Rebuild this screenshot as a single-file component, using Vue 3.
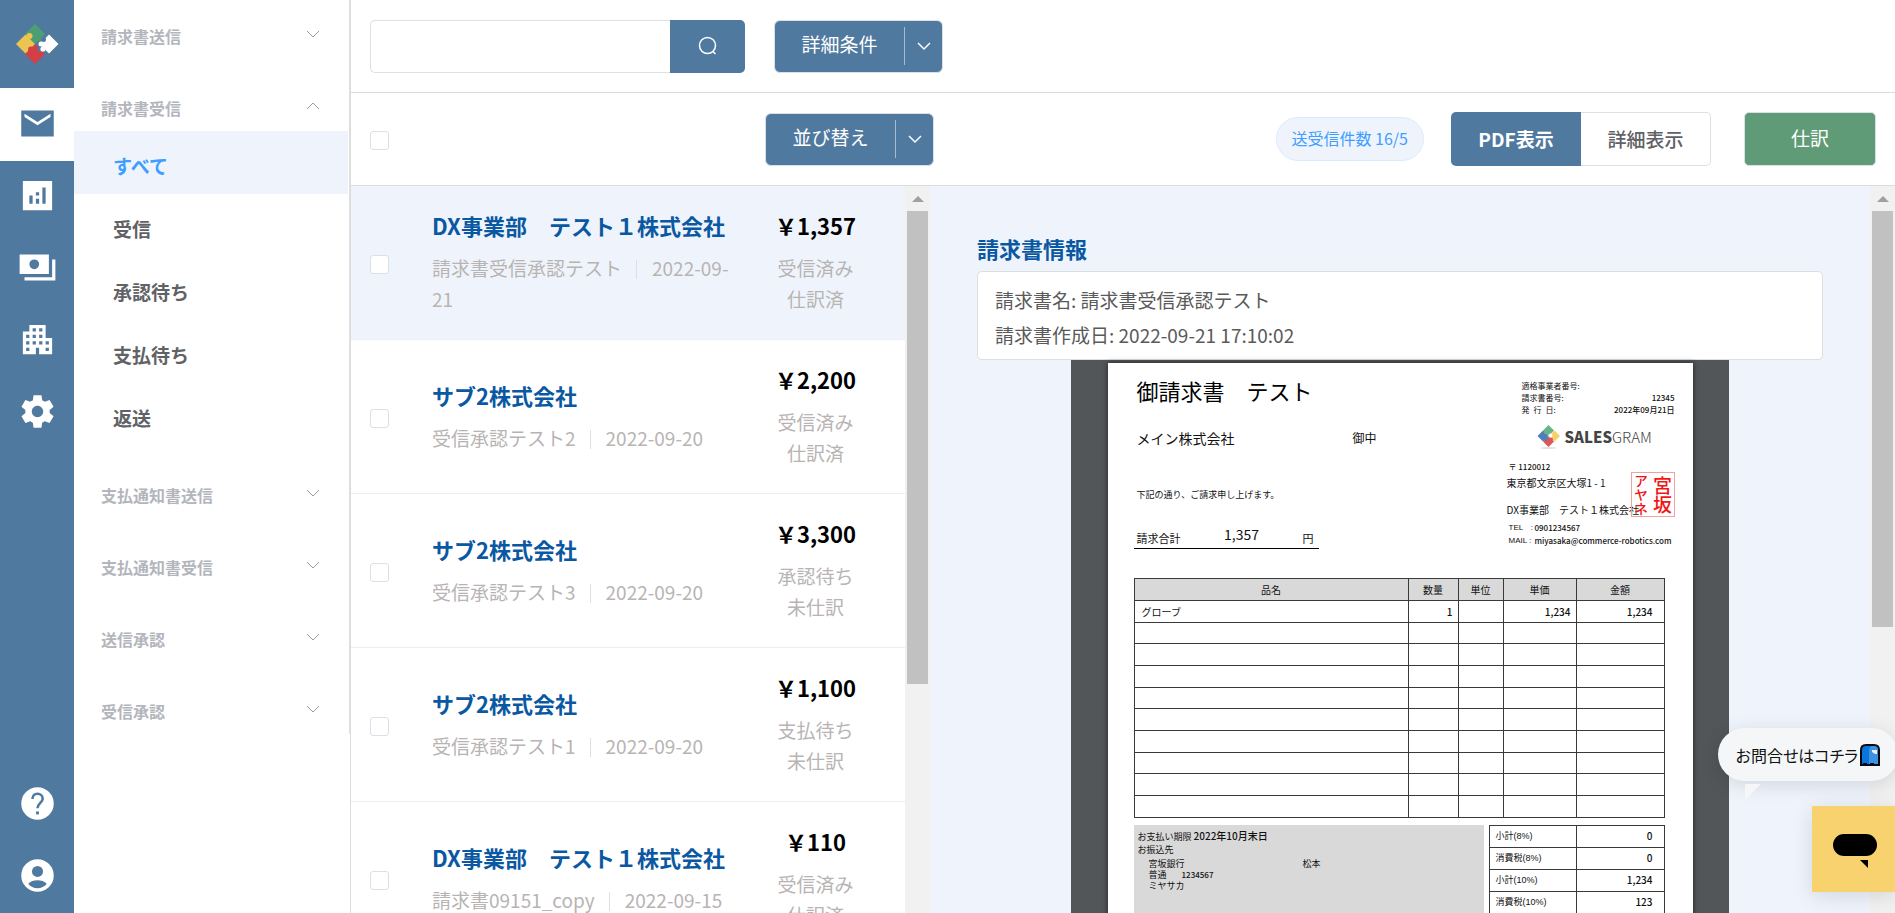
<script setup>
import { ref } from 'vue'

const mainIcons = [
  { id: 'mail', label: 'メール', d: 'M22 4H2v16h20V4zm-2 4l-8 5-8-5V6l8 5 8-5v2z' },
  { id: 'chart', label: '分析', d: 'M21 3H3v18h18V3zM9 17H7v-5h2v5zm4 0h-2v-3h2v3zm0-5h-2v-2h2v2zm4 5h-2V7h2v10z' },
  { id: 'payments', label: '支払', d: 'M19 4H1v12h18V4zm-9 9a3 3 0 1 1 0-6 3 3 0 0 1 0 6zM23 7v13H4v-2h17V7h2z' },
  { id: 'company', label: '会社', d: 'M17 11V3H7v4H3v14h8v-4h2v4h8V11h-4zM7 19H5v-2h2v2zm0-4H5v-2h2v2zm0-4H5V9h2v2zm4 4H9v-2h2v2zm0-4H9V9h2v2zm0-4H9V5h2v2zm4 8h-2v-2h2v2zm0-4h-2V9h2v2zm0-4h-2V5h2v2zm4 12h-2v-2h2v2zm0-4h-2v-2h2v2z' },
  { id: 'settings', label: '設定', d: 'M19.44 12.99l-.01.02c.04-.33.08-.67.08-1.01 0-.34-.03-.66-.07-.99l.01.02 2.44-1.92-2.43-4.22-2.87 1.16.01.01c-.52-.4-1.09-.74-1.71-1h.01L14.44 2H9.57l-.44 3.07h.01c-.62.26-1.19.6-1.71 1l.01-.01-2.88-1.17-2.44 4.22 2.44 1.92.01-.02c-.04.33-.07.65-.07.99 0 .34.03.68.08 1.01l-.01-.02-2.1 1.65-.33.26 2.43 4.2 2.88-1.15-.02-.04c.53.41 1.1.75 1.73 1.01h-.03L9.58 22h4.85s.03-.18.06-.42l.38-2.65h-.01c.62-.26 1.2-.6 1.73-1.01l-.02.04 2.88 1.15 2.43-4.2s-.14-.12-.33-.26l-2.08-1.66zM12 15.5c-1.93 0-3.5-1.57-3.5-3.5s1.57-3.5 3.5-3.5 3.5 1.57 3.5 3.5-1.57 3.5-3.5 3.5z' },
]
const activeIcon = ref('mail')

const groups = [
  { title: '請求書送信' },
  { title: '請求書受信', open: true, items: ['すべて', '受信', '承認待ち', '支払待ち', '返送'] },
  { title: '支払通知書送信' },
  { title: '支払通知書受信' },
  { title: '送信承認' },
  { title: '受信承認' },
]
const activeItem = ref('すべて')

const invoices = [
  { company: 'DX事業部　テスト１株式会社', name: '請求書受信承認テスト', date: '2022-09-21', amount: '￥1,357', s1: '受信済み', s2: '仕訳済' },
  { company: 'サブ2株式会社', name: '受信承認テスト2', date: '2022-09-20', amount: '￥2,200', s1: '受信済み', s2: '仕訳済' },
  { company: 'サブ2株式会社', name: '受信承認テスト3', date: '2022-09-20', amount: '￥3,300', s1: '承認待ち', s2: '未仕訳' },
  { company: 'サブ2株式会社', name: '受信承認テスト1', date: '2022-09-20', amount: '￥1,100', s1: '支払待ち', s2: '未仕訳' },
  { company: 'DX事業部　テスト１株式会社', name: '請求書09151_copy', date: '2022-09-15', amount: '￥110', s1: '受信済み', s2: '仕訳済' },
]

const totals = [
  ['小計(8%)', '0'],
  ['消費税(8%)', '0'],
  ['小計(10%)', '1,234'],
  ['消費税(10%)', '123'],
  ['', ''],
]
</script>

<template>
  <div class="app">
    <nav class="rail" aria-label="メイン">
      <a href="#" class="brand" aria-label="ホーム">
        <svg width="44" height="40" viewBox="0 0 44 40">
          <path d="M20 0 30 10 20 20 10 10z" fill="#4b9f72" />
          <path d="M20 20 30 30 20 40 10 30z" fill="#d43f46" />
          <path d="M10.500 10.500 20 20 10.500 29.500 1 20z" fill="#ecc452" />
          <circle cx="14.500" cy="12" r="3" fill="#ecc452" />
          <circle cx="16" cy="25.500" r="3" fill="#d43f46" />
          <circle cx="25.500" cy="14.500" r="3" fill="#4b9f72" />
          <circle cx="25" cy="25" r="2.600" fill="#5079a0" />
          <path d="M34 10.500 43.500 20 34 29.500 24.500 20z" fill="#fff" />
          <circle cx="28.500" cy="15.500" r="2.500" fill="#5079a0" />
          <circle cx="28" cy="25" r="2.600" fill="#fff" />
          <circle cx="26" cy="20" r="2.500" fill="#fff" />
        </svg>
      </a>
      <a v-for="i in mainIcons" :key="i.id" href="#" class="rail-link rail-main" :class="{ active: i.id === activeIcon }" :aria-label="i.label" @click.prevent="activeIcon = i.id">
        <svg width="39" height="39" viewBox="0 0 24 24"><path :d="i.d" fill="currentColor" fill-rule="evenodd" /></svg>
      </a>
      <div class="rail-bottom">
        <a href="#" class="rail-link" aria-label="ヘルプ">
          <svg width="39" height="39" viewBox="0 0 24 24">
            <circle cx="12" cy="12" r="10" fill="currentColor" />
            <path d="M8.900 9.200C8.900 7.200 10.200 6 12 6s3.200 1.200 3.200 3c0 2.500-3.200 2.800-3.200 5.900" fill="none" stroke="#5079a0" stroke-width="1.600" />
            <path d="M11.100 16.900h1.800v1.800h-1.800z" fill="#5079a0" />
          </svg>
        </a>
        <a href="#" class="rail-link" aria-label="アカウント">
          <svg width="39" height="39" viewBox="0 0 24 24">
            <circle cx="12" cy="12" r="10" fill="currentColor" />
            <circle cx="12" cy="9.500" r="3.400" fill="#5079a0" />
            <path d="M6.300 17.100C7.600 15.600 9.700 14.900 12 14.900s4.400.7 5.700 2.200c-1.300 1.700-3.400 2.800-5.700 2.800s-4.400-1.100-5.700-2.800z" fill="#5079a0" />
          </svg>
        </a>
      </div>
    </nav>

    <aside class="side">
      <nav class="menu" aria-label="請求書メニュー">
        <div v-for="g in groups" :key="g.title" class="group">
          <button type="button" class="group-head">
            <span>{{ g.title }}</span>
            <svg class="group-arrow" width="14" height="8" viewBox="0 0 14 8"><path :d="g.open ? 'M1 7l6-6 6 6' : 'M1 1l6 6 6-6'" fill="none" stroke="#9a9ca3" /></svg>
          </button>
          <a v-for="it in g.items" :key="it" href="#" class="item" :class="{ active: it === activeItem }" @click.prevent="activeItem = it">{{ it }}</a>
        </div>
      </nav>
    </aside>

    <main class="main">
      <header class="bar">
        <div class="search">
          <input type="text" class="search-input" aria-label="検索" />
          <button type="button" class="search-btn" aria-label="検索する">
            <svg width="20" height="20" viewBox="0 0 20 20" fill="none" stroke="#fff" stroke-width="1.500"><circle cx="9.500" cy="9.500" r="8" /><path d="M14.500 15l3 3" /></svg>
          </button>
        </div>
        <button type="button" class="split">
          <span class="split-label">詳細条件</span>
          <span class="split-arrow"><svg width="14" height="9" viewBox="0 0 14 9"><path d="M1 1l6 6 6-6" fill="none" stroke="#fff" stroke-width="1.500" /></svg></span>
        </button>
      </header>

      <div class="bar">
        <div class="bar-left">
          <input type="checkbox" class="check" aria-label="すべて選択" />
          <button type="button" class="split">
            <span class="split-label">並び替え</span>
            <span class="split-arrow"><svg width="14" height="9" viewBox="0 0 14 9"><path d="M1 1l6 6 6-6" fill="none" stroke="#fff" stroke-width="1.500" /></svg></span>
          </button>
        </div>
        <div class="bar-right">
          <span class="pill">送受信件数 16/5</span>
          <div class="toggle">
            <button type="button" class="toggle-btn on">PDF表示</button>
            <button type="button" class="toggle-btn">詳細表示</button>
          </div>
          <button type="button" class="green">仕訳</button>
        </div>
      </div>

      <div class="panes">
        <section class="pane">
          <ul class="list">
            <li v-for="(v, n) in invoices" :key="n" class="row" :class="{ selected: n === 0 }">
              <input type="checkbox" class="check" :aria-label="v.name" />
              <div class="row-text">
                <div class="row-title">{{ v.company }}</div>
                <div class="row-sub">{{ v.name }}<span class="vbar"></span>{{ v.date }}</div>
              </div>
              <div class="row-right">
                <div class="row-amount">{{ v.amount }}</div>
                <div class="row-sub">{{ v.s1 }}</div>
                <div class="row-sub">{{ v.s2 }}</div>
              </div>
            </li>
          </ul>
          <div class="track" aria-hidden="true">
            <svg width="12" height="6" viewBox="0 0 12 6"><path d="M6 0l6 6H0z" fill="#a0a0a0" /></svg>
            <div class="thumb thumb-list"></div>
          </div>
        </section>

        <section class="pane detail">
          <div class="detail-body">
            <h2 class="detail-title">請求書情報</h2>
            <div class="card">
              <div>請求書名: 請求書受信承認テスト</div>
              <div>請求書作成日: 2022-09-21 17:10:02</div>
            </div>
            <div class="viewer">
              <article class="sheet">
                <div class="sheet-top">
                  <div class="to">
                    <h3 class="doc-title">御請求書　テスト</h3>
                    <div class="client"><span>メイン株式会社</span><span class="onchu">御中</span></div>
                    <p class="note">下記の通り、ご請求申し上げます。</p>
                    <div class="sum"><span>請求合計</span><span class="sum-value">1,357</span><span>円</span></div>
                  </div>
                  <div class="from">
                    <div class="meta"><span>適格事業者番号:</span></div>
                    <div class="meta"><span>請求書番号:</span><span class="value">12345</span></div>
                    <div class="meta"><span>発&ensp;行&ensp;日:</span><span class="value">2022年09月21日</span></div>
                    <div class="logo">
                      <svg width="24" height="24" viewBox="0 0 24 24">
                        <ellipse cx="11.500" cy="23" rx="8" ry="1" fill="#e2e2e2" />
                        <path d="M11.500 0 17 5.500 11.500 11 6 5.500z" fill="#66b587" />
                        <path d="M11.500 11 17 16.500 11.500 22 6 16.500z" fill="#e05558" />
                        <path d="M6 5.500 11.500 11 6 16.500.5 11z" fill="#4f7fb8" />
                        <path d="M17.500 5.500 23 11l-5.500 5.500L12 11z" fill="#f7cf6b" />
                        <circle cx="8.700" cy="7" r="2" fill="#66b587" />
                        <circle cx="9" cy="14" r="2" fill="#4f7fb8" />
                        <circle cx="14" cy="14.500" r="2" fill="#e05558" />
                        <circle cx="13.500" cy="10.500" r="2" fill="#fff" />
                      </svg>
                      <span class="logo-text"><b>SALES</b>GRAM</span>
                    </div>
                    <div class="zip">〒 <span class="value">1120012</span></div>
                    <div class="addr">東京都文京区大塚1 - 1</div>
                    <div class="corp">DX事業部　テスト１株式会社</div>
                    <div class="contact"><span class="contact-key">TEL　:</span><span class="value">0901234567</span></div>
                    <div class="contact"><span class="contact-key">MAIL :</span><span class="mail">miyasaka@commerce-robotics.com</span></div>
                    <div class="stamp"><span class="stamp-1">宮坂</span><span class="stamp-2">アヤネ</span></div>
                  </div>
                </div>

                <table class="lines">
                  <colgroup><col /><col class="c-qty" /><col class="c-unit" /><col class="c-price" /><col class="c-total" /></colgroup>
                  <thead>
                    <tr><th>品名</th><th>数量</th><th>単位</th><th>単価</th><th>金額</th></tr>
                  </thead>
                  <tbody>
                    <tr><td>グローブ</td><td class="num tight">1</td><td></td><td class="num tight">1,234</td><td class="num">1,234</td></tr>
                    <tr v-for="n in 9" :key="n"><td></td><td></td><td></td><td></td><td></td></tr>
                  </tbody>
                </table>

                <div class="sheet-bottom">
                  <div class="bank">
                    <div class="due">お支払い期限 <span class="due-date">2022年10月末日</span></div>
                    <div class="due">お振込先</div>
                    <div class="bank-row"><span>宮坂銀行</span><span>松本</span></div>
                    <div class="bank-line">普通<span class="acct">1234567</span></div>
                    <div class="bank-line">ミヤサカ</div>
                  </div>
                  <table class="totals">
                    <tbody>
                      <tr v-for="t in totals" :key="t[0]"><th>{{ t[0] }}</th><td class="num">{{ t[1] }}</td></tr>
                    </tbody>
                  </table>
                </div>
              </article>
            </div>
          </div>
          <div class="track" aria-hidden="true">
            <svg width="12" height="6" viewBox="0 0 12 6"><path d="M6 0l6 6H0z" fill="#a0a0a0" /></svg>
            <div class="thumb thumb-detail"></div>
          </div>
        </section>
      </div>
    </main>

    <div class="bubble">
      <span>お問合せはコチラ</span>
      <svg width="20" height="22" viewBox="0 0 20 22">
        <path d="M1 21V6c0-3 2-5 5-5h8c3 0 5 2 5 5v15z" fill="#0a74da" stroke="#0a0a14" stroke-width="2" />
        <path d="M9 20V7c0-2.500 1-4.500 3-5h2c2.500 0 4 1.500 4 4v14z" fill="#3b93e0" />
        <path d="M12 6h5v4h-2l-3-2z" fill="#eef" />
        <path d="M3 19h4v2H3zM10 19h4v2h-4z" fill="#0a0a14" />
      </svg>
      <svg class="tail" width="16" height="16" viewBox="0 0 16 16"><path d="M0 0h16L0 16z" fill="#f5f6f8" /></svg>
    </div>
    <button type="button" class="chat" aria-label="チャット">
      <svg width="44" height="34" viewBox="0 0 44 34"><rect width="44" height="22" rx="11" /><path d="M27 26h8v8z" /></svg>
    </button>
  </div>
</template>

<style>
body {
  margin: 0;
}
</style>

<style scoped>
.app {
  display: flex;
  height: 100vh;
  overflow: hidden;
  position: relative;
  background: #fff;
  color: #606266;
  font-family: "Noto Sans CJK JP", sans-serif;
  font-size: 19px;
}
.app *,
.app {
  box-sizing: border-box;
}
button,
input {
  font-family: inherit;
  margin: 0;
}
a {
  text-decoration: none;
  color: inherit;
}
svg {
  display: block;
  flex: none;
}

/* icon rail */
.rail {
  flex: 0 0 74px;
  display: flex;
  flex-direction: column;
  background: #5079a0;
  padding-bottom: 2px;
}
.brand {
  height: 88px;
  padding: 24px 0 0 15px;
}
.rail-link {
  height: 72px;
  display: flex;
  align-items: center;
  justify-content: center;
  color: #fff;
}
.rail-main {
  padding-bottom: 3px;
}
.rail-link.active {
  height: 73px;
  background: #fff;
  color: #5079a0;
}
.rail-bottom {
  margin-top: auto;
}

/* side menu */
.side {
  flex: 0 0 276px;
}
.menu {
  display: flex;
  flex-direction: column;
  gap: 28px;
  padding: 15px 1px 0 0;
  border-right: 1px solid #dfe0e2;
}
.group-head {
  width: 100%;
  height: 44px;
  display: flex;
  align-items: center;
  justify-content: space-between;
  padding: 0 28px 2px 27px;
  border: 0;
  background: none;
  color: #b3b5bd;
  font-size: 16px;
  font-weight: 700;
}
.group-arrow {
  margin-bottom: 4px;
}
.item {
  display: flex;
  align-items: center;
  height: 63px;
  padding: 6px 0 0 39px;
  font-weight: 700;
}
.item.active {
  background: #eff4fc;
  color: #409eff;
}

/* top bars */
.main {
  flex: 1;
  min-width: 0;
  display: flex;
  flex-direction: column;
  border-left: 1px solid #dcdcdc;
}
.bar {
  flex: 0 0 93px;
  display: flex;
  align-items: center;
  border-bottom: 1px solid #dcdcdc;
  padding: 0 19px;
}
.search {
  display: flex;
  width: 375px;
  height: 53px;
  margin-right: 29px;
}
.search-input {
  flex: 1;
  min-width: 0;
  border: 1px solid #dcdfe6;
  border-right: 0;
  border-radius: 5px 0 0 5px;
  padding: 0 16px;
  font-size: 19px;
}
.search-btn {
  width: 75px;
  display: flex;
  align-items: center;
  justify-content: center;
  border: 0;
  border-radius: 0 5px 5px 0;
  background: #5079a0;
}
.split {
  display: flex;
  align-items: center;
  width: 169px;
  height: 53px;
  padding: 0;
  border: 1px solid #dcdfe6;
  border-radius: 6px;
  background: #5079a0;
  color: #fff;
  font-size: 19px;
}
.split-label {
  width: 130px;
  height: 38px;
  line-height: 33px;
  border-right: 1px solid #a7bccf;
}
.split-arrow {
  flex: 1;
  display: flex;
  justify-content: center;
}
.bar-left {
  flex: 0 0 564px;
  display: flex;
  align-items: center;
  justify-content: space-between;
}
.bar-left .check {
  margin-top: 3px;
}
.bar-right {
  display: flex;
  align-items: center;
  margin-left: auto;
}
.check {
  appearance: none;
  flex: none;
  width: 19px;
  height: 19px;
  border: 1px solid #dcdfe6;
  border-radius: 3px;
  background: #fff;
}
.pill {
  height: 44px;
  line-height: 41px;
  padding: 0 15px;
  border: 1px solid #d9ecff;
  border-radius: 22px;
  background: #eff4fc;
  color: #409eff;
  font-size: 16px;
}
.toggle {
  display: flex;
  margin-left: 27px;
}
.toggle-btn {
  width: 130px;
  height: 54px;
  padding: 0 0 2px;
  border: 1px solid #dcdfe6;
  border-left: 0;
  border-radius: 0 5px 5px 0;
  background: #fff;
  color: #606266;
  font-size: 19px;
  font-weight: 500;
}
.toggle-btn.on {
  border: 0;
  border-radius: 5px 0 0 5px;
  background: #5079a0;
  color: #fff;
  font-weight: 700;
}
.green {
  width: 132px;
  height: 54px;
  margin-left: 33px;
  padding: 0 0 4px;
  border: 1px solid #dcdfe6;
  border-radius: 5px;
  background: #5f9b76;
  color: #fff;
  font-size: 19px;
}

/* panes */
.panes {
  flex: 1;
  min-height: 0;
  display: grid;
  grid-template-columns: 3fr 5fr;
}
.pane {
  display: flex;
  min-width: 0;
  min-height: 0;
  overflow: hidden;
}
.track {
  flex: 0 0 25px;
  display: flex;
  flex-direction: column;
  align-items: center;
  gap: 9px;
  padding-top: 10px;
  background: #f1f1f1;
}
.thumb {
  width: 21px;
  background: #c1c1c1;
}
.thumb-list {
  height: 66%;
}
.thumb-detail {
  height: 58%;
}
.list {
  flex: 1;
  min-width: 0;
  margin: 0;
  padding: 0;
  list-style: none;
}
.row {
  display: flex;
  align-items: center;
  height: 154px;
  padding: 0 9px 0 19px;
  border-bottom: 1px solid #ebeef5;
}
.row.selected {
  background: #eff4fc;
}
.row .check {
  margin-top: 3px;
}
.row-text {
  flex: 1;
  min-width: 0;
  padding: 0 0 3px 43px;
}
.row-title {
  margin-bottom: 10px;
  line-height: 34px;
  font-size: 22px;
  font-weight: 700;
  color: #0b58a2;
  white-space: nowrap;
}
.row-sub {
  line-height: 31px;
  color: #b8b4b4;
}
.vbar {
  display: inline-block;
  width: 1px;
  height: 19px;
  margin: 0 15px 0 14px;
  vertical-align: -3px;
  background: #dcdfe6;
}
.row-right {
  flex: 0 0 161px;
  padding-bottom: 3px;
  text-align: center;
}
.row-amount {
  margin-bottom: 10px;
  line-height: 34px;
  font-size: 22px;
  font-weight: 700;
  color: #000;
}

/* detail */
.detail {
  background: #eff4fc;
}
.detail-body {
  flex: 1;
  min-width: 0;
  padding-top: 44px;
}
.detail-title {
  margin: 0 5% 5px;
  line-height: 36px;
  font-size: 22px;
  font-weight: 700;
  color: #0b58a2;
}
.card {
  margin: 0 5%;
  padding: 10px 17px 7px;
  border: 1px solid #dcdfe0;
  border-radius: 5px;
  background: #fff;
  color: #5a5a5a;
  line-height: 35px;
}
.viewer {
  width: 70%;
  margin: 0 auto;
  padding-top: 3px;
  background: #525659;
}
.sheet {
  max-width: 585px;
  min-height: 827px;
  margin: 0 auto;
  padding: 0 28px 0 26px;
  background: #fff;
  box-shadow: 0 0 5px #222;
  color: #111;
  font-size: 10px;
}
.sheet-top {
  display: flex;
  justify-content: space-between;
  height: 215px;
  margin-right: -10px;
}
.to {
  padding-top: 13px;
}
.doc-title {
  margin: 0 0 24px 3px;
  font-size: 22px;
  font-weight: 400;
  line-height: 28px;
  color: #000;
}
.client {
  display: flex;
  width: 240px;
  justify-content: space-between;
  margin: 0 0 40px 3px;
  font-size: 14px;
  line-height: 20px;
}
.onchu {
  font-size: 12px;
}
.note {
  margin: 0 0 26px 3px;
  font-size: 9px;
  line-height: 14px;
}
.sum {
  display: flex;
  justify-content: space-between;
  width: 185px;
  padding: 0 5px 0 3px;
  border-bottom: 1px solid #000;
  font-size: 11px;
  line-height: 20px;
}
.sum-value {
  font-size: 14px;
  line-height: 12px;
}
.value,
.num,
.due-date,
.mail,
.acct {
  font-weight: 500;
}
.from {
  position: relative;
  width: 168px;
  padding-top: 17px;
}
.meta {
  display: flex;
  justify-content: space-between;
  padding-left: 15px;
  font-size: 8px;
  line-height: 12px;
}
.logo {
  display: flex;
  align-items: center;
  gap: 4px;
  height: 24px;
  margin: 9px 0 11px 30px;
}
.logo-text {
  font-size: 15px;
  font-weight: 300;
  line-height: 24px;
  color: #444;
}
.logo-text b {
  font-weight: 900;
}
.zip {
  padding-left: 2px;
  font-size: 8px;
  line-height: 14px;
}
.addr {
  margin: 1px 0 11px;
  line-height: 16px;
}
.corp {
  margin-bottom: 3px;
  line-height: 16px;
  white-space: nowrap;
}
.contact {
  display: flex;
  padding-left: 2px;
  font-size: 8px;
  line-height: 13px;
  white-space: nowrap;
}
.contact-key {
  flex: 0 0 26px;
  font-family: "Liberation Sans", "Noto Sans CJK JP", sans-serif;
}
.stamp {
  position: absolute;
  right: 0;
  top: 109px;
  width: 44px;
  height: 45px;
  display: flex;
  flex-direction: row-reverse;
  align-items: center;
  justify-content: space-around;
  border: 1px solid #eda3a0;
  color: #f01616;
  white-space: nowrap;
}
.stamp-1,
.stamp-2 {
  writing-mode: vertical-rl;
  font-weight: 500;
}
.stamp-1 {
  font-size: 19px;
  line-height: 20px;
}
.stamp-2 {
  font-size: 14px;
  line-height: 16px;
}

/* invoice tables */
table {
  border-collapse: collapse;
  table-layout: fixed;
}
.lines {
  width: 100%;
}
.lines tr {
  height: 22px;
}
.lines tbody tr:nth-child(3n + 2) {
  height: 21px;
}
th,
td {
  padding: 0 7px;
  border: 1px solid #3a3a3a;
  line-height: 16px;
  font-weight: 400;
}
.lines th {
  background: #d9d9d9;
}
.c-qty {
  width: 50px;
}
.c-unit {
  width: 45px;
}
.c-price {
  width: 73px;
}
.c-total {
  width: 88px;
}
.num {
  text-align: right;
  padding-right: 11px;
  font-weight: 500;
}
.num.tight {
  padding-right: 5px;
}
.sheet-bottom {
  display: flex;
  justify-content: space-between;
  align-items: flex-start;
  margin-top: 7px;
}
.bank {
  width: 350px;
  height: 120px;
  padding: 4px;
  background: #d9d9d9;
  font-size: 9px;
  line-height: 11px;
}
.due {
  line-height: 13px;
}
.due-date {
  font-size: 10px;
}
.bank-row {
  display: flex;
  justify-content: space-between;
  width: 172px;
  margin: 2px 0 0 11px;
}
.bank-line {
  margin-left: 11px;
}
.acct {
  margin-left: 15px;
  font-size: 8px;
}
.totals {
  width: 176px;
}
.totals tr {
  height: 22px;
}
.totals th,
.totals td {
  padding-bottom: 1px;
}
.totals th {
  padding: 0 6px 1px;
  text-align: left;
  font-family: "Liberation Sans", "Noto Sans CJK JP", sans-serif;
  font-size: 9px;
}

/* chat widget */
.bubble {
  position: absolute;
  right: -3px;
  bottom: 132px;
  display: flex;
  align-items: center;
  gap: 2px;
  height: 53px;
  padding: 0 18px;
  border-radius: 27px;
  background: #f5f6f8;
  box-shadow: 0 4px 20px rgba(0, 0, 0, 0.12);
  color: #111;
  font-size: 16px;
  font-feature-settings: "palt";
}
.tail {
  position: absolute;
  left: 27px;
  top: 56px;
}
.chat {
  position: absolute;
  right: 0;
  bottom: 21px;
  width: 83px;
  height: 86px;
  padding: 4px 0 0 3px;
  display: flex;
  align-items: center;
  justify-content: center;
  border: 0;
  background: #f7d26e;
  box-shadow: 0 4px 20px rgba(0, 0, 0, 0.12);
}
</style>
